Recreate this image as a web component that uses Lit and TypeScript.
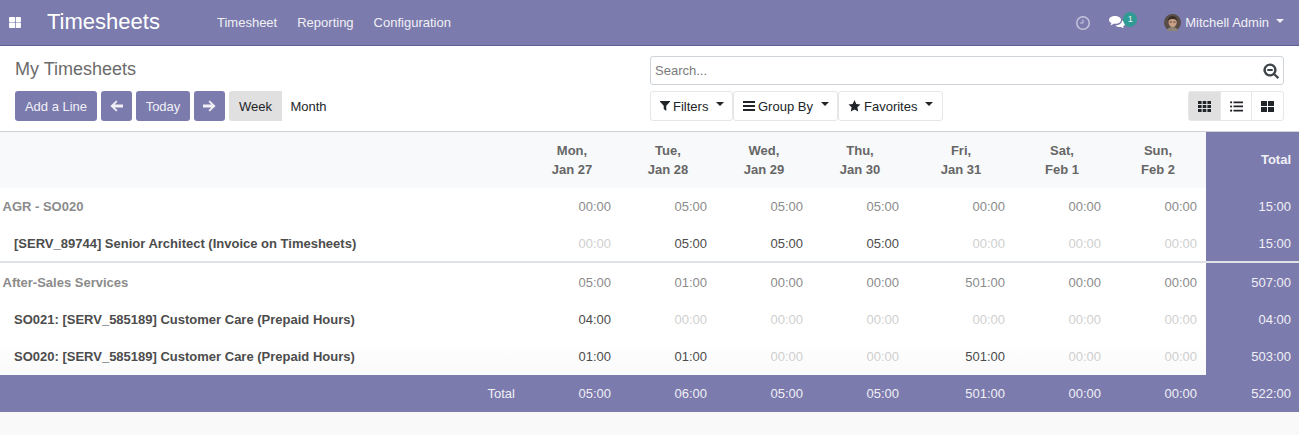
import { LitElement, html, css, svg } from "lit";
import { customElement } from "lit/decorators.js";

const icon = (w: number, h: number, vb: string, body: unknown) =>
  html`<svg class="ic" width=${w} height=${h} viewBox=${vb} fill="currentColor">${body}</svg>`;

const thLarge = icon(12, 11, "0 0 13 12", svg`<path d="M1 0h4.600c.5 0 1 .4 1 1v3.600c0 .5-.5 1-1 1H1c-.6 0-1-.5-1-1V1c0-.6.4-1 1-1zM7.400 0H12c.6 0 1 .4 1 1v3.600c0 .5-.4 1-1 1H7.400zM0 6.400h6.600V12H1c-.6 0-1-.4-1-1zM7.400 6.400H13V11c0 .6-.4 1-1 1H7.400z"/>`);
const arrowL = icon(13, 12, "0 0 13 12", svg`<path d="M6.200.4 7.500 1.700 4.600 4.500H13v3H4.600l2.900 2.800-1.300 1.300L.4 6z"/>`);
const arrowR = icon(13, 12, "0 0 13 12", svg`<path d="M6.800.4 5.500 1.700 8.400 4.500H0v3h8.400l-2.900 2.800 1.300 1.300L12.600 6z"/>`);
const filter = icon(10, 10, "0 0 11 11", svg`<path d="M0 0h11v.8L6.900 5.200V11L4.100 8.800V5.200L0 .8z"/>`);
const bars = icon(12, 10, "0 0 12 10", svg`<path d="M0 0h12v2H0zM0 4h12v2H0zM0 8h12v2H0z"/>`);
const star = icon(13, 12, "0 0 13 12", svg`<path d="M6.500 0l1.800 3.900 4.200.5-3.100 2.900.8 4.200-3.700-2.100-3.700 2.100.8-4.200L.5 4.400l4.200-.5z"/>`);
const caret = html`<span class="caret"></span>`;
const searchMinus = icon(17, 16, "0 0 17 16", svg`<path fill-rule="evenodd" d="M7 .5a6.500 6.500 0 0 1 5.300 10.300l3.900 3.500-1.600 1.600-3.800-3.700A6.500 6.500 0 1 1 7 .5zm0 2.300a4.200 4.200 0 1 0 0 8.400 4.200 4.200 0 0 0 0-8.400zM4.300 6h5.400v2H4.300z"/>`);
const clock = icon(14, 14, "0 0 14 14", svg`<path fill-rule="evenodd" d="M7 0a7 7 0 1 1 0 14A7 7 0 0 1 7 0zm0 1.500a5.500 5.500 0 1 0 0 11 5.500 5.500 0 0 0 0-11zM6.300 3.500h1.200V7.600H4V6.500h2.300z"/>`);
const comments = icon(16, 13, "0 0 16 13", svg`<path d="M6 0c3.300 0 6 1.700 6 3.900S9.300 7.800 6 7.800c-.5 0-1 0-1.500-.1C3.700 8.500 2.700 9 1.300 9.200c.5-.6 1-1.300 1.100-2.100C1 6.400 0 5.200 0 3.900 0 1.700 2.700 0 6 0zM13 4.600c1.800.5 3 1.700 3 3.100 0 1.100-.8 2.100-2 2.800.1.700.5 1.300 1 1.800-1.200-.1-2.200-.6-2.900-1.300-.4.100-.8.100-1.200.1-1.900 0-3.500-.7-4.300-1.700 3.700-.1 6.700-2.100 6.400-4.800z"/>`);
const thIcon = icon(13, 11, "0 0 13 11", svg`<path d="M0 0h3.600v3H0zM4.700 0h3.600v3H4.700zM9.400 0H13v3H9.400zM0 4h3.600v3H0zM4.700 4h3.600v3H4.700zM9.400 4H13v3H9.400zM0 8h3.600v3H0zM4.700 8h3.600v3H4.700zM9.400 8H13v3H9.400z"/>`);
const listIcon = icon(13, 11, "0 0 13 11", svg`<circle cx="1.100" cy="1.300" r="1.100"/><circle cx="1.100" cy="5.500" r="1.100"/><circle cx="1.100" cy="9.700" r="1.100"/><path d="M3.500.5H13v1.700H3.500zM3.500 4.600H13v1.700H3.500zM3.500 8.800H13v1.700H3.500z"/>`);
const gridIcon = icon(13, 11, "0 0 13 11", svg`<path d="M0 0h6v5H0zM7 0h6v5H7zM0 6h6v5H0zM7 6h6v5H7z"/>`);
const avatar = html`<svg class="avatar" width="17" height="17" viewBox="0 0 18 18"><circle cx="9" cy="9" r="9" fill="#5a4d45"/><path d="M4.800 8.500c0-3 1.800-4.500 4.400-4.500s4.300 1.500 4.300 4.500c0 2.800-1.700 5.500-4.300 5.500S4.800 11.300 4.800 8.500z" fill="#c99f86"/><path d="M4 8c-.3-3.500 2-6 5-6s5.300 2.500 5 6c-.8-1.600-1.700-2.700-5-2.700S4.800 6.400 4 8z" fill="#3a2f29"/><path d="M3 18c.7-3 2.800-4.300 6-4.300s5.300 1.300 6 4.300z" fill="#8d8478"/><path d="M6 8.500h2.200M10 8.500h2.200" stroke="#3a302a" stroke-width=".9"/></svg>`;

type Row = { label: string; kind: "group" | "line"; vals: string[]; total: string; sep?: boolean };
const rows: Row[] = [
  { label: "AGR - SO020", kind: "group", vals: ["00:00", "05:00", "05:00", "05:00", "00:00", "00:00", "00:00"], total: "15:00" },
  { label: "[SERV_89744] Senior Architect (Invoice on Timesheets)", kind: "line", vals: ["00:00", "05:00", "05:00", "05:00", "00:00", "00:00", "00:00"], total: "15:00" },
  { label: "After-Sales Services", kind: "group", vals: ["05:00", "01:00", "00:00", "00:00", "501:00", "00:00", "00:00"], total: "507:00", sep: true },
  { label: "SO021: [SERV_585189] Customer Care (Prepaid Hours)", kind: "line", vals: ["04:00", "00:00", "00:00", "00:00", "00:00", "00:00", "00:00"], total: "04:00" },
  { label: "SO020: [SERV_585189] Customer Care (Prepaid Hours)", kind: "line", vals: ["01:00", "01:00", "00:00", "00:00", "501:00", "00:00", "00:00"], total: "503:00" },
];
const days = [["Mon,", "Jan 27"], ["Tue,", "Jan 28"], ["Wed,", "Jan 29"], ["Thu,", "Jan 30"], ["Fri,", "Jan 31"], ["Sat,", "Feb 1"], ["Sun,", "Feb 2"]];
const foot = ["05:00", "06:00", "05:00", "05:00", "501:00", "00:00", "00:00"];
const widths = [524, 96, 96, 96, 96, 106, 96, 96, 93];

@customElement("app-root")
export class AppRoot extends LitElement {
  static styles = css`
    :host { display: block; font-family: "Liberation Sans", Arial, sans-serif; font-size: 13px; color: #4c4c4c; background: #f9f9f9; height: 435px; overflow: hidden; }
    .ic { display: block; flex: none; }
    .nav { height: 46px; box-sizing: border-box; background: #7c7bad; border-bottom: 1px solid #5f5e97; display: flex; align-items: center; color: #fff; }
    .apps { margin-left: 9px; width: 38px; }
    .brand { font-size: 22px; width: 170px; margin-top: -1px; }
    .menu { display: flex; gap: 20px; color: #f0f0f6; }
    .right { margin-left: auto; display: flex; align-items: center; color: #f0f0f6; }
    .clock { color: #c5c4dc; margin-right: 19px; }
    .msg { position: relative; margin-right: 39px; color: #fff; }
    .badge { position: absolute; left: 14px; top: -4px; width: 14px; height: 15px; border-radius: 50%; background: #2f9b94; color: #e8f5f4; font-size: 9px; line-height: 15px; text-align: center; }
    .avatar { margin-right: 4px; display: block; }
    .user { display: flex; align-items: center; margin-right: 15px; }
    .user .caret { margin-left: 7px; border-top-color: #f0f0f6; }
    .caret { display: inline-block; border-top: 4px solid currentColor; border-left: 4px solid transparent; border-right: 4px solid transparent; margin-top: -3px; }
    .panel { height: 86px; box-sizing: border-box; background: #fff; border-bottom: 1px solid #ced4da; display: grid; grid-template-columns: 635px 634px; grid-template-rows: 35px 30px; padding: 10px 15px 0; }
    .title { font-size: 18px; color: #6b6b6b; margin-top: 3px; }
    .search { height: 29px; box-sizing: border-box; border: 1px solid #ced4da; border-radius: 3px; display: flex; align-items: center; justify-content: space-between; padding: 0 3px 0 4px; color: #7a7a7a; }
    .search .ic { color: #3f4448; }
    .bleft { display: flex; align-items: stretch; height: 30px; }
    .btn { display: flex; align-items: center; justify-content: center; background: #7c7bad; color: #f0f0f6; border-radius: 3px; margin-right: 4px; box-sizing: border-box; }
    .add { width: 82px; } .arrow { width: 31px; } .today { width: 54px; }
    .mode { display: flex; align-items: center; justify-content: center; color: #212529; height: 30px; }
    .week { width: 53px; background: #e0e0e0; border-radius: 3px 0 0 3px; }
    .month { width: 53px; }
    .bright { display: flex; justify-content: space-between; }
    .filters { display: flex; height: 30px; }
    .fbtn { display: flex; align-items: center; gap: 3px; border: 1px solid #e4e6e8; border-radius: 3px; box-sizing: border-box; color: #212529; background: #fff; padding-left: 9px; }
    .fbtn .caret { margin-left: 5px; margin-top: -4px; }
    .f1 { width: 83px; } .f2 { width: 105px; } .f3 { width: 105px; }
    .views { display: flex; height: 30px; border: 1px solid #e4e6e8; border-radius: 3px; box-sizing: border-box; width: 96px; color: #212529; }
    .views div { flex: 1; display: flex; align-items: center; justify-content: center; }
    .views div + div { border-left: 1px solid #e4e6e8; }
    .views .on { background: #e0e0e0; }
    table { border-collapse: collapse; table-layout: fixed; width: 1299px; background: #fff; }
    th, td { padding: 0 9px; text-align: right; box-sizing: border-box; height: 37px; white-space: nowrap; }
    thead th { height: 56px; background: #f8f9fa; text-align: center; font-weight: 700; color: #666; line-height: 19px; padding: 0; }
    th.tot, td.tot { background: #7c7bad; color: #f0f0f6; text-align: right; padding-right: 8px; }
    thead th.tot { font-weight: 700; text-align: right; padding: 0 8px 2px 0; }
    td.name { text-align: left; padding: 0; }
    tr.group td.name { padding-left: 2.5px; font-weight: 700; color: #8b8b8b; }
    tr.line td.name { padding-left: 14px; font-weight: 700; color: #4c4c4c; }
    tr.group td { color: #8b8b8b; }
    tr.line td { color: #4c4c4c; }
    tr.line td.zero { color: #cfcfcf; }
    tr.group td.tot, tr.line td.tot { color: #f0f0f6; }
    tr.sep td { border-top: 2px solid #dee2e6; height: 39px; }
    tr.last td:not(.tot) { background: linear-gradient(#fff, #fafafa); }
    tfoot td { background: #7c7bad; color: #f0f0f6; }
  `;

  render() {
    return html`
      <div class="nav">
        <div class="apps">${thLarge}</div>
        <div class="brand">Timesheets</div>
        <div class="menu"><span>Timesheet</span><span>Reporting</span><span>Configuration</span></div>
        <div class="right">
          <div class="clock">${clock}</div>
          <div class="msg">${comments}<span class="badge">1</span></div>
          <div class="user">${avatar}<span>Mitchell Admin</span>${caret}</div>
        </div>
      </div>
      <div class="panel">
        <div class="title">My Timesheets</div>
        <div class="search"><span>Search...</span>${searchMinus}</div>
        <div class="bleft">
          <div class="btn add">Add a Line</div>
          <div class="btn arrow">${arrowL}</div>
          <div class="btn today">Today</div>
          <div class="btn arrow">${arrowR}</div>
          <div class="mode week">Week</div>
          <div class="mode month">Month</div>
        </div>
        <div class="bright">
          <div class="filters">
            <div class="fbtn f1">${filter}Filters ${caret}</div>
            <div class="fbtn f2">${bars}Group By ${caret}</div>
            <div class="fbtn f3">${star}Favorites ${caret}</div>
          </div>
          <div class="views"><div class="on">${thIcon}</div><div>${listIcon}</div><div>${gridIcon}</div></div>
        </div>
      </div>
      <table>
        <colgroup>${widths.map((w) => html`<col style="width:${w}px" />`)}</colgroup>
        <thead><tr><th></th>${days.map((d) => html`<th>${d[0]}<br />${d[1]}</th>`)}<th class="tot">Total</th></tr></thead>
        <tbody>
          ${rows.map((r, i) => html`<tr class="${r.kind} ${r.sep ? "sep" : ""} ${i === 4 ? "last" : ""}">
            <td class="name">${r.label}</td>
            ${r.vals.map((v) => html`<td class=${v === "00:00" ? "zero" : ""}>${v}</td>`)}
            <td class="tot">${r.total}</td>
          </tr>`)}
        </tbody>
        <tfoot><tr><td>Total</td>${foot.map((v) => html`<td>${v}</td>`)}<td class="tot">522:00</td></tr></tfoot>
      </table>
    `;
  }
}
